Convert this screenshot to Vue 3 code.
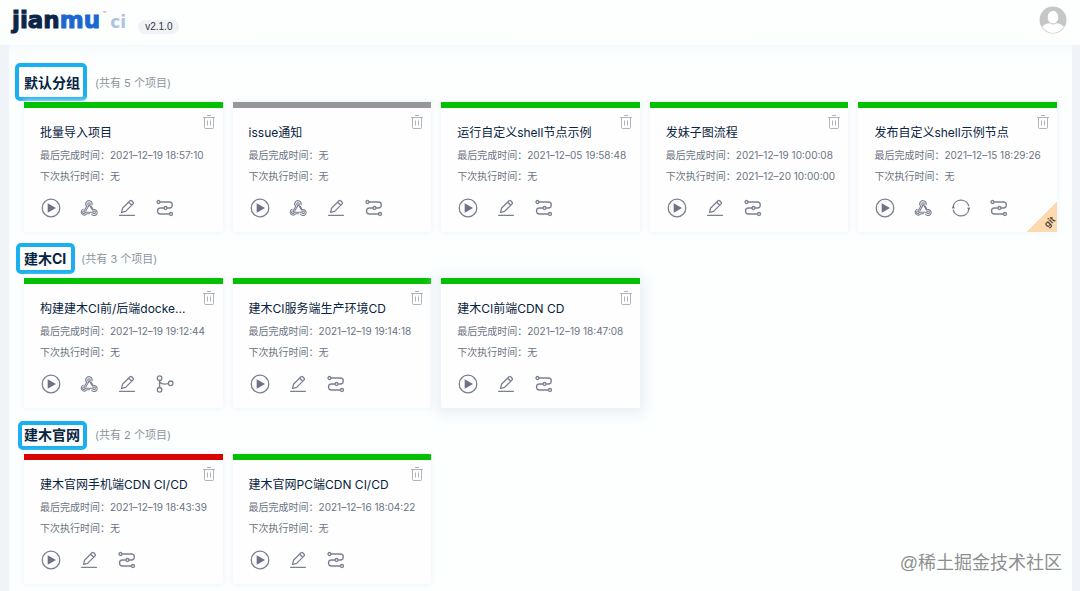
<script setup>
const groups = [
  {
    name: '默认分组',
    mark: 'mark-a',
    projects: [
      { name: '批量导入项目', status: 'ok', last: '2021–12–19 18:57:10', next: '无', actions: ['play', 'hook', 'edit', 'flow'] },
      { name: 'issue通知', status: 'idle', last: '无', next: '无', actions: ['play', 'hook', 'edit', 'flow'] },
      { name: '运行自定义shell节点示例', status: 'ok', last: '2021–12–05 19:58:48', next: '无', actions: ['play', 'edit', 'flow'] },
      { name: '发妹子图流程', status: 'ok', last: '2021–12–19 10:00:08', next: '2021–12–20 10:00:00', actions: ['play', 'edit', 'flow'] },
      { name: '发布自定义shell示例节点', status: 'ok', last: '2021–12–15 18:29:26', next: '无', actions: ['play', 'hook', 'sync', 'flow'], git: true },
    ],
  },
  {
    name: '建木CI',
    mark: 'mark-b',
    projects: [
      { name: '构建建木CI前/后端docke...', status: 'ok', last: '2021–12–19 19:12:44', next: '无', actions: ['play', 'hook', 'edit', 'branch'] },
      { name: '建木CI服务端生产环境CD', status: 'ok', last: '2021–12–19 19:14:18', next: '无', actions: ['play', 'edit', 'flow'] },
      { name: '建木CI前端CDN CD', status: 'ok', last: '2021–12–19 18:47:08', next: '无', actions: ['play', 'edit', 'flow'], raised: true },
    ],
  },
  {
    name: '建木官网',
    mark: 'mark-c',
    projects: [
      { name: '建木官网手机端CDN CI/CD', status: 'fail', last: '2021–12–19 18:43:39', next: '无', actions: ['play', 'edit', 'flow'] },
      { name: '建木官网PC端CDN CI/CD', status: 'ok', last: '2021–12–16 18:04:22', next: '无', actions: ['play', 'edit', 'flow'] },
    ],
  },
]

const labels = { play: '触发', hook: 'Webhook', edit: '编辑', flow: '流程', sync: '同步', branch: '分支' }
</script>

<template>
  <div class="page">
    <header class="topbar">
      <a class="logo" href="#" aria-label="jianmu ci">
        <span class="jian">jian</span><span class="mu">mu</span><span class="tm">™</span><span class="ci">ci</span>
      </a>
      <span class="version">v2.1.0</span>
      <button class="avatar" type="button" aria-label="用户">
        <svg viewBox="0 0 28 28" width="28" height="28">
          <circle cx="14" cy="14" r="13.5" fill="#c5c6c8" />
          <path d="M3.200 20.800C5.500 18.300 8 17.300 11 17.300h6c3 0 5.500 1 7.800 3.500A12.600 12.600 0 0 1 3.200 20.800z" fill="#fff" />
          <ellipse cx="14" cy="11.200" rx="5.800" ry="6.800" fill="#fff" stroke="#c5c6c8" stroke-width="1" />
        </svg>
      </button>
    </header>

    <main class="content">
      <section v-for="group in groups" :key="group.name" class="group">
        <div class="group-head">
          <h2 class="group-name" :class="group.mark">{{ group.name }}</h2>
          <span class="count">(共有 {{ group.projects.length }} 个项目)</span>
        </div>
        <div class="cards">
          <article v-for="p in group.projects" :key="p.name" class="card" :class="[p.status, { raised: p.raised }]">
            <a class="title" href="#">{{ p.name }}</a>
            <p class="time">最后完成时间：{{ p.last }}</p>
            <p class="time">下次执行时间：{{ p.next }}</p>
            <div class="actions">
              <button v-for="a in p.actions" :key="a" type="button" :aria-label="labels[a]">
                <svg viewBox="0 0 22 22" width="22" height="22">
                  <template v-if="a === 'play'">
                    <circle cx="11" cy="11" r="8.800" />
                    <path class="solid" d="M7.700 6.200v9.600l8.300-4.800z" />
                  </template>
                  <g v-else-if="a === 'hook'" class="fine">
                    <circle cx="11" cy="7" r="1.300" />
                    <circle cx="5.900" cy="15.300" r="1.300" />
                    <circle cx="16.100" cy="15.300" r="1.300" />
                    <path d="M8.700 9.200A3.200 3.200 0 1 1 14 7.800M8.700 9.200L6.500 13.200M11 8.300L7.900 13.800M11.700 8.200l2.700 4.900a3 3 0 1 1-.8 4.100M13.300 9.300l1.500 2.700M7.200 15.300H14M5.200 12.300a3 3 0 1 0 3.500 4.500h3" />
                  </g>
                  <template v-else-if="a === 'edit'">
                    <path d="M5.600 15.400l.9-4.100 7.500-7.500c.5-.5 1.200-.5 1.700 0l1.400 1.400c.5.5.5 1.200 0 1.700l-7.500 7.500zM12.700 5.200l3.100 3.100M3.500 18.300h15" />
                  </template>
                  <template v-else-if="a === 'flow'">
                    <circle cx="4.500" cy="5" r="1.500" />
                    <circle cx="11.500" cy="11" r="1.500" />
                    <circle cx="17" cy="17" r="1.500" />
                    <path d="M6 5h9.300a3 3 0 0 1 0 6H13M10 11H6.500a3 3 0 0 0 0 6h9" />
                  </template>
                  <template v-else-if="a === 'sync'">
                    <path d="M3.100 10A8 8 0 0 1 18.700 8.800M18.900 12A8 8 0 0 1 3.300 13.200" />
                    <path class="solid" d="M1.700 11.600l1.500-2.800 1.800 2.400zM20.300 10.400l-1.500 2.800-1.800-2.400z" />
                  </template>
                  <template v-else>
                    <circle cx="5.600" cy="5.200" r="2.300" />
                    <circle cx="5.600" cy="16.800" r="2.300" />
                    <circle cx="16.700" cy="10.300" r="2.300" />
                    <path d="M5.600 7.500v7M5.600 7.500c0 3.200 3 4.100 8.800 3.200" />
                  </template>
                </svg>
              </button>
            </div>
            <button class="remove" type="button" aria-label="删除">
              <svg viewBox="0 0 14 16" width="14" height="16">
                <path d="M1 3.500h12M5 1.500h4M2.500 3.500v10.200c0 .5.300.8.800.8h7.400c.5 0 .8-.3.800-.8V3.500M5.500 6.500v5M8.500 6.500v5" />
              </svg>
            </button>
            <span v-if="p.git" class="corner"><span>git</span></span>
          </article>
        </div>
      </section>
    </main>
    <div class="watermark">@稀土掘金技术社区</div>
  </div>
</template>

<style>
body {
  margin: 0;
}
</style>

<style scoped>
.page {
  position: relative;
  min-height: 100vh;
  display: flex;
  flex-direction: column;
  background: #f0f3f8;
  font-family: Inter, "Noto Sans CJK SC", sans-serif;
  color: #082340;
}
.topbar {
  display: flex;
  align-items: flex-start;
  height: 45px;
  padding: 0 13px 0 12px;
  background: #fdffff;
}
button {
  padding: 0;
  border: 0;
  background: none;
  cursor: pointer;
}
svg {
  display: block;
}
.logo {
  display: flex;
  align-items: baseline;
  margin-top: 6px;
  font: bold 23px/28px "DejaVu Sans", sans-serif;
  text-decoration: none;
}
.jian {
  color: #0b2447;
  -webkit-text-stroke: 1px #0b2447;
}
.mu {
  color: #1a68cf;
  -webkit-text-stroke: 1px #1a68cf;
}
.tm {
  align-self: flex-start;
  margin: 4px 0 0 2px;
  color: #8b9bb5;
  font: 7px/10px Inter, sans-serif;
}
.ci {
  margin-left: 4px;
  color: #aec3e0;
  font-size: 17px;
}
.version {
  margin: 20px 0 0 12px;
  padding: 0 7px;
  border-radius: 7px;
  background: #f0f2f5;
  color: #30363f;
  font: 10px/14px "Liberation Sans", sans-serif;
}
.avatar {
  margin: 6px 0 0 auto;
}
.content {
  flex: 1;
  margin: 0 8px 0 9px;
  padding: 11px 15px 7px;
  background: linear-gradient(#f5fafc, #fdffff 14px);
}
.group-head {
  display: flex;
  align-items: center;
  height: 30px;
  padding: 12px 0 4px;
}
.group-name {
  position: relative;
  margin: 0;
  font-size: 14px;
  line-height: 20px;
  font-weight: 700;
}
.group-name::after {
  content: "";
  position: absolute;
  inset: -6px -9px -5px -8px;
  border: 4px solid #19aff0;
  border-radius: 5px;
}
.group-name.mark-a::after {
  inset: -10px -7px -8px -9px;
}
.group-name.mark-c::after {
  inset: -4px -7px -5px -6px;
}
.count {
  margin-left: 15px;
  color: #8d93a0;
  font-size: 11px;
  line-height: 20px;
}
.cards {
  display: grid;
  grid-template-columns: repeat(5, minmax(0, 1fr));
  gap: 10px;
}
.card {
  position: relative;
  padding: 15px 16px 13px;
  border-top: 6px solid #02c002;
  background: #fefefe;
  box-shadow: 0 0 6px 1px #f0f5f9;
}
.card.idle {
  border-color: #979797;
}
.card.fail {
  border-color: #d80404;
}
.card.raised {
  box-shadow: 0 2px 14px 4px #e6eef4;
}
.title {
  display: block;
  color: #082340;
  font-size: 12px;
  line-height: 20px;
  text-decoration: none;
  white-space: nowrap;
}
.time {
  margin: 0;
  color: #6b7483;
  font-size: 10px;
  line-height: 21px;
  white-space: nowrap;
}
.title + .time {
  margin-top: 2px;
}
.actions {
  display: flex;
  gap: 16px;
  margin-top: 10px;
}
.actions svg {
  fill: none;
  stroke: #7b8190;
  stroke-width: 1.3;
  stroke-linecap: round;
  stroke-linejoin: round;
}
.actions .fine {
  stroke-width: 1.1;
}
.actions .solid {
  fill: #6c7389;
  stroke: none;
}
.remove {
  position: absolute;
  top: 6px;
  right: 7px;
}
.remove svg {
  fill: none;
  stroke: #b0b4bb;
  stroke-width: 1;
}
.corner {
  position: absolute;
  right: 0;
  bottom: 0;
  width: 30px;
  height: 30px;
  background: linear-gradient(135deg, transparent 50%, #fdd9b0 50%);
}
.corner span {
  position: absolute;
  right: 2px;
  bottom: 4px;
  color: #4a3a2e;
  font-size: 9px;
  line-height: 12px;
  font-weight: 600;
  transform: rotate(-45deg);
}
.watermark {
  position: absolute;
  right: 18px;
  bottom: 15px;
  color: #8e8e8e;
  font: 18px/26px "Liberation Sans", "Noto Sans CJK SC", sans-serif;
}
</style>
